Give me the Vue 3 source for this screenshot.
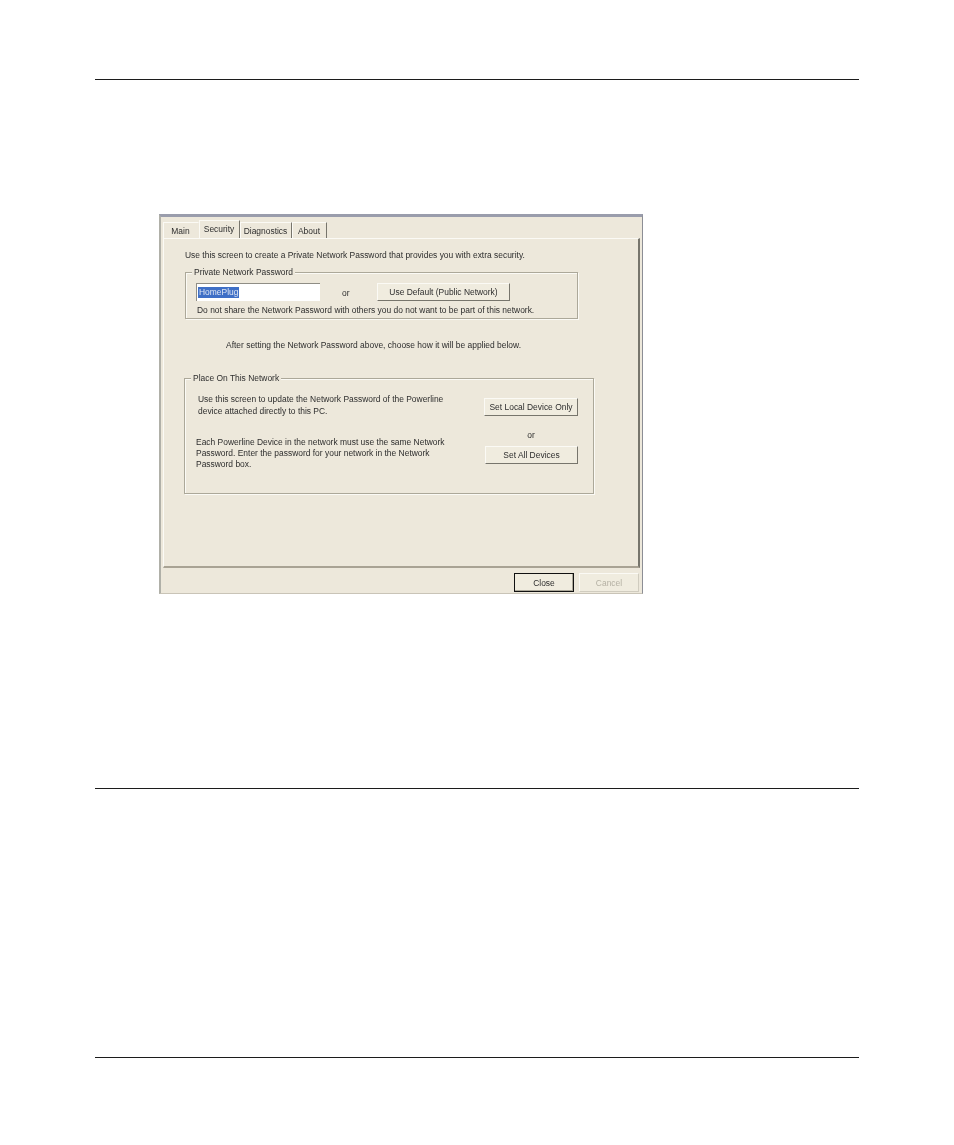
<script setup>
const tabs = [
  { label: 'Main', cls: 'main' },
  { label: 'Security', cls: 'security' },
  { label: 'Diagnostics', cls: 'diag' },
  { label: 'About', cls: 'about' }
]
</script>

<template>
  <div class="page">
    <div class="rule"></div>
    <section class="dialog">
      <nav class="tabs">
        <span v-for="t in tabs" :key="t.label" class="tab" :class="t.cls">{{ t.label }}</span>
      </nav>
      <div class="panel">
        <p class="intro">Use this screen to create a Private Network Password that provides you with extra security.</p>
        <div class="group group-a">
          <span class="legend">Private Network Password</span>
          <div class="pw-row">
            <div class="input"><span class="sel">HomePlug</span></div>
            <span class="or">or</span>
            <button class="btn btn-default">Use Default (Public Network)</button>
          </div>
          <p class="hint">Do not share the Network Password with others you do not want to be part of this network.</p>
        </div>
        <p class="after">After setting the Network Password above, choose how it will be applied below.</p>
        <div class="group group-b">
          <span class="legend">Place On This Network</span>
          <div class="place">
            <div class="place-text">
              <p class="t1">Use this screen to update the Network Password of the Powerline<br>device attached directly to this PC.</p>
              <p class="t2">Each Powerline Device in the network must use the same Network<br>Password. Enter the password for your network in the Network<br>Password box.</p>
            </div>
            <div class="place-btns">
              <button class="btn btn-local">Set Local Device Only</button>
              <span class="or2">or</span>
              <button class="btn btn-all">Set All Devices</button>
            </div>
          </div>
        </div>
      </div>
      <footer class="foot">
        <button class="btn btn-foot btn-close">Close</button>
        <button class="btn btn-foot btn-cancel">Cancel</button>
      </footer>
    </section>
    <div class="rule rule-2"></div>
    <div class="rule rule-3"></div>
  </div>
</template>

<style>
html, body { margin: 0; background: #fff; }
</style>

<style scoped>
.page {
  box-sizing: border-box;
  width: 954px;
  height: 1145px;
  padding: 79px 95px 0;
  background: #fff;
  overflow: hidden;
}
.rule { height: 1px; width: 764px; background: #1c1c1c; }
.rule-2 { margin-top: 194px; }
.rule-3 { margin-top: 268px; }
.dialog {
  box-sizing: border-box;
  width: 484px;
  height: 380px;
  margin: 134px 0 0 64px;
  background: #ede8db;
  border-top: 3px solid #9a9dac;
  border-left: 2px solid #b0b0a8;
  border-right: 1px solid #8c8e95;
  border-bottom: 1px solid #c9c4b7;
  font-family: "Liberation Sans", Arial, sans-serif;
  font-size: 8.45px;
  color: #2e2e2e;
  padding: 0 2px;
  filter: blur(0.4px);
}
p { margin: 0; }
.tabs {
  display: flex;
  height: 21px;
  align-items: flex-end;
  padding-left: 0;
}
.tab {
  box-sizing: border-box;
  height: 16px;
  line-height: 16px;
  text-align: center;
  border-top: 1px solid #fbfaf5;
  border-right: 1px solid #77756c;
  box-shadow: inset 1px 0 #fbfaf5;
}
.main { width: 36px; border-right-color: transparent; }
.security { width: 41px; height: 18px; line-height: 17px; }
.diag { width: 52px; }
.about { width: 35px; }
.panel {
  box-sizing: border-box;
  height: 330px;
  padding: 10px 0 0 21px;
  border-top: 1px solid #fbfaf5;
  border-left: 1px solid #fbfaf5;
  border-right: 2px solid #77756c;
  border-bottom: 2px solid #a9a394;
}
.intro { height: 12px; line-height: 12px; }
.group {
  position: relative;
  box-sizing: border-box;
  border: 1px solid #aca899;
  box-shadow: inset 1px 1px #fbfaf5, 1px 1px #fbfaf5;
}
.group-a { width: 393px; height: 47px; margin-top: 11px; }
.group-b { width: 410px; height: 116px; margin: 27px 0 0 -1px; }
.legend {
  position: absolute;
  left: 6px;
  top: -6px;
  padding: 0 2px;
  line-height: 11px;
  background: #ede8db;
}
.pw-row { display: flex; align-items: center; padding: 10px 0 0 10px; }
.input {
  box-sizing: border-box;
  width: 124px;
  height: 18px;
  background: #fff;
  border-top: 1px solid #8f8d85;
  border-left: 1px solid #8f8d85;
  padding: 3px 0 0 1px;
}
.sel { display: inline-block; line-height: 11px; background: #3f6fc6; color: #dfe6f3; padding: 0 1px; }
.or { margin-left: 22px; width: 35px; padding-top: 2px; }
.btn {
  box-sizing: border-box;
  padding: 0;
  margin: 0;
  font: inherit;
  color: inherit;
  background: #f0ecdf;
  border: 1px solid;
  border-color: #fbfaf5 #77756c #77756c #fbfaf5;
  text-align: center;
}
.btn-default { width: 133px; height: 18px; }
.hint { padding: 3px 0 0 11px; line-height: 12px; }
.after { width: 298px; margin: 20px 0 0 41px; line-height: 12px; white-space: nowrap; }
.place { display: flex; padding-top: 14px; }
.place-text { width: 299px; }
.t1 { padding-left: 13px; line-height: 12px; }
.t2 { padding: 20px 0 0 11px; line-height: 11px; }
.place-btns { display: flex; flex-direction: column; align-items: flex-end; width: 94px; margin-top: 5px; }
.btn-local { width: 94px; height: 18px; }
.or2 { align-self: center; margin: 14px 0 5px; line-height: 11px; }
.btn-all { width: 93px; height: 18px; }
.foot { display: flex; justify-content: flex-end; gap: 5px; padding: 5px 1px 0 0; }
.btn-foot { width: 60px; height: 19px; }
.btn-close { border: 1px solid #111; box-shadow: inset -1px -1px #aca899; }
.btn-cancel { color: #b5b1a4; border-color: #fbfaf5 #d0ccbf #d0ccbf #fbfaf5; }
</style>
